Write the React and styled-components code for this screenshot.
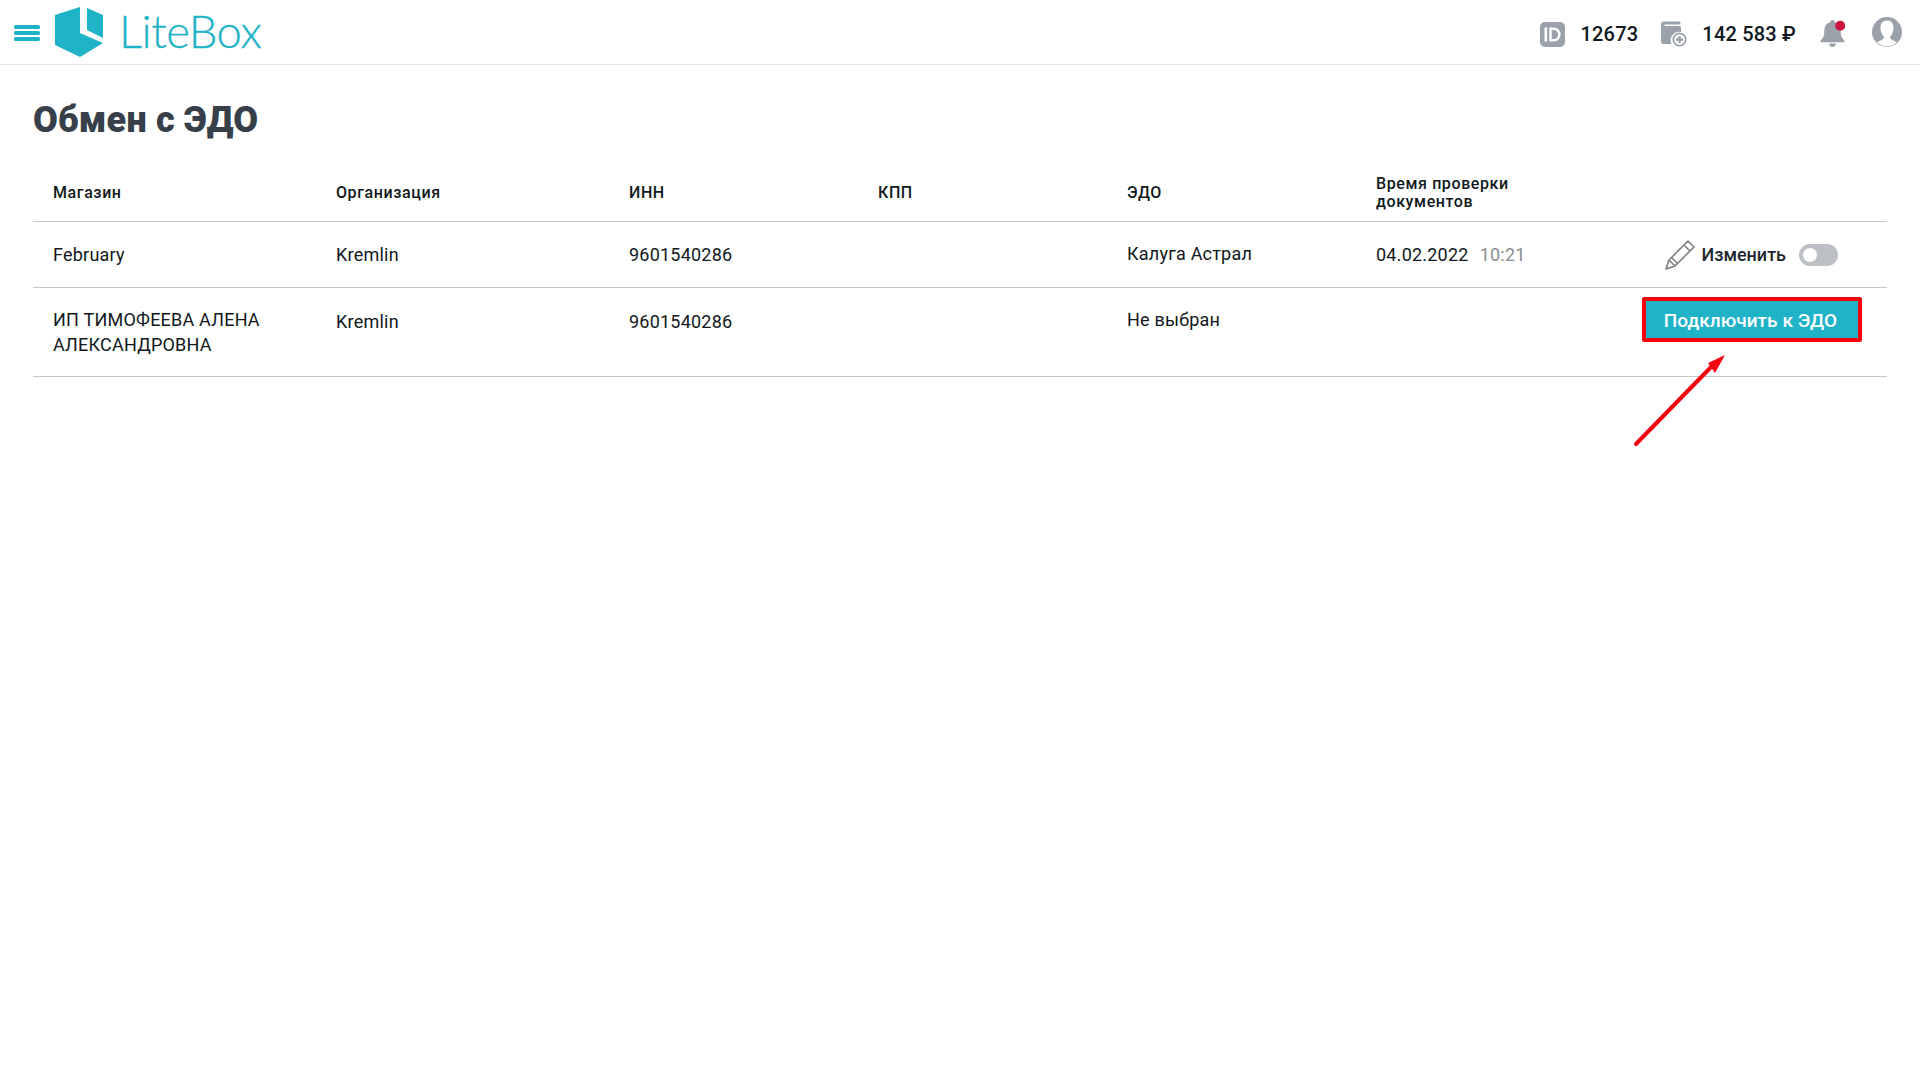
import React from "react";
import styled, { createGlobalStyle } from "styled-components";

const Global = createGlobalStyle`
  html, body { margin: 0; padding: 0; background: #fff; }
  body { font-family: Roboto, "Liberation Sans", sans-serif; color: #111820; }
`;

const Page = styled.div`
  position: relative;
  width: 1920px;
  height: 1080px;
  overflow: hidden;
  background: #fff;
`;
const TopBar = styled.header`
  display: flex;
  align-items: center;
  justify-content: space-between;
  height: 64px;
  box-sizing: content-box;
  border-bottom: 1px solid #e3e6ef;
  padding: 0 18px 0 14px;
`;
const Brand = styled.div`
  display: flex;
  align-items: center;
`;
const Burger = styled.div`
  display: flex;
  flex-direction: column;
  gap: 2px;
  width: 26px;
  margin-right: 15px;
  margin-top: 1px;
  span { display: block; height: 4px; border-radius: 1.5px; background: #1fb3c8; }
`;
const LogoText = styled.span`
  font-family: Lato, sans-serif;
  font-weight: 300;
  font-size: 45.5px;
  line-height: 64px;
  color: #1fb3c8;
  margin-left: 14px;
  margin-top: -2px;
  letter-spacing: -0.5px;
  -webkit-text-stroke: 0.3px #1fb3c8;
`;
const Stats = styled.div`
  display: flex;
  align-items: center;
  padding-top: 4px;
`;
const StatValue = styled.span`
  font-size: 20px;
  font-weight: 500;
  letter-spacing: 0.2px;
  color: #111820;
  margin-left: ${(p) => p.$left}px;
  margin-right: ${(p) => p.$right}px;
  margin-top: -1px;
`;
const BellIcon = styled.svg`
  margin-right: 27px;
  margin-top: -2px;
`;
const AvatarIcon = styled.svg`
  margin-top: -4px;
`;
const Content = styled.main`
  padding: 0 33px;
`;
const Title = styled.h1`
  margin: 0;
  padding-top: 31px;
  height: 49px;
  font-size: 36px;
  line-height: 48px;
  font-weight: 900;
  color: #373f4a;
  letter-spacing: 0.2px;
`;
const Grid = styled.div`
  display: grid;
  grid-template-columns: 283px 293px 249px 249px 249px 1fr;
  border-bottom: 1px solid #c4c6c8;
  align-items: center;
  height: ${(p) => p.$h}px;
  box-sizing: content-box;
`;
const HeadCell = styled.div`
  padding-left: 20px;
  margin-top: 20px;
  font-size: 16px;
  line-height: 18.5px;
  font-weight: 500;
  letter-spacing: 0.6px;
  color: #111820;
`;
const Cell = styled.div`
  padding-left: 20px;
  font-size: 18px;
  line-height: 25px;
  letter-spacing: 0.22px;
  color: #111820;
  margin-top: ${(p) => p.$shift || 0}px;
`;
const TimeCell = styled(Cell)`
  display: flex;
  align-items: center;
  justify-content: space-between;
  padding-right: 49px;
`;
const Muted = styled.span`
  color: #8a8d90;
  margin-left: 11px;
`;
const Actions = styled.div`
  display: flex;
  align-items: center;
`;
const EditLabel = styled.span`
  font-size: 18px;
  font-weight: 500;
  letter-spacing: 0;
  color: #20262e;
  margin-left: 7px;
`;
const Toggle = styled.div`
  width: 39px;
  height: 22px;
  border-radius: 11px;
  background: #bcc0c5;
  margin-left: 13px;
  display: flex;
  align-items: center;
  padding-left: 4px;
  box-sizing: border-box;
  &::before {
    content: "";
    width: 14px;
    height: 14px;
    border-radius: 50%;
    background: #fff;
  }
`;
const ConnectAction = styled.div`
  display: flex;
  justify-content: flex-end;
  padding-right: 25px;
  margin-top: -25px;
`;
const ConnectButton = styled.button`
  width: 220px;
  height: 45px;
  box-sizing: border-box;
  border: 4px solid #f5000f;
  border-radius: 2px;
  background: #1fb3c8;
  color: #fff;
  font-family: inherit;
  font-size: 19px;
  font-weight: 500;
  letter-spacing: 0.05px;
  padding: 2px 3px 0 0;
`;
const Arrow = styled.svg`
  position: absolute;
  left: 1625px;
  top: 345px;
`;

export default function App() {
  return (
    <Page>
      <Global />
      <TopBar>
        <Brand>
          <Burger><span /><span /><span /></Burger>
          <svg width="50" height="52" viewBox="0 0 50 52">
            <path fill="#1fb3c8" d="M25 1 L0 9 V39 L25 51 L48 37 L25 27 Z" />
            <path fill="#1fb3c8" d="M32 2 L48 9 V32 L32 24 Z" />
          </svg>
          <LogoText>LiteBox</LogoText>
        </Brand>
        <Stats>
          <svg width="25" height="25" viewBox="0 0 25 25">
            <rect width="25" height="25" rx="5" fill="#9aa1aa" />
            <rect x="4.5" y="5.5" width="2.6" height="14" fill="#fff" />
            <path d="M10.5 6.8 h3.2 a5.7 5.7 0 0 1 0 11.4 h-3.2 Z" fill="none" stroke="#fff" strokeWidth="2.4" />
          </svg>
          <StatValue $left={15} $right={23}>12673</StatValue>
          <svg width="26" height="26" viewBox="0 0 26 26">
            <path fill="#9aa1aa" d="M3 0.5 H18 a1.5 1.5 0 0 1 0 3 H3.5 V5 H18 a2 2 0 0 1 2 2 V11 A8.5 8.5 0 0 0 10.5 23 H2.5 A2.5 2.5 0 0 1 0 20.5 V3.5 A3 3 0 0 1 3 0.5 Z" />
            <circle cx="18.5" cy="18.5" r="6.2" fill="none" stroke="#9aa1aa" strokeWidth="1.8" />
            <path d="M18.5 15 V22 M15 18.5 H22" stroke="#9aa1aa" strokeWidth="2.4" />
          </svg>
          <StatValue $left={15} $right={24}>142 583 ₽</StatValue>
          <BellIcon width="25" height="29" viewBox="0 0 26 30">
            <path fill="#9aa1aa" d="M13 1 a2.4 2.4 0 0 1 2.4 2.4 C20 4.6 21.5 8.5 21.5 13 C21.5 18 23 20 25.5 22.5 V24 H0.5 V22.5 C3 20 4.5 18 4.5 13 C4.5 8.5 6 4.6 10.6 3.4 A2.4 2.4 0 0 1 13 1 Z" />
            <path fill="#9aa1aa" d="M9.5 25.5 H16.5 A3.5 3.5 0 0 1 9.5 25.5 Z" />
            <circle cx="21" cy="7" r="5.2" fill="#cc1440" />
          </BellIcon>
          <AvatarIcon width="30" height="30" viewBox="0 0 30 30">
            <circle cx="15" cy="15" r="15" fill="#9aa1aa" />
            <path fill="#fff" d="M15 3.5 C20 3.5 22 7.5 21.5 12 C21 16 19 19 18 20 C18 22 20 23 25 25 A13.5 13.5 0 0 1 5 25 C10 23 12 22 12 20 C11 19 9 16 8.5 12 C8 7.5 10 3.5 15 3.5 Z" />
          </AvatarIcon>
        </Stats>
      </TopBar>
      <Content>
        <Title>Обмен с ЭДО</Title>
        <Grid $h={76}>
          <HeadCell>Магазин</HeadCell>
          <HeadCell>Организация</HeadCell>
          <HeadCell>ИНН</HeadCell>
          <HeadCell>КПП</HeadCell>
          <HeadCell>ЭДО</HeadCell>
          <HeadCell>Время проверки<br />документов</HeadCell>
        </Grid>
        <Grid $h={65}>
          <Cell>February</Cell>
          <Cell>Kremlin</Cell>
          <Cell>9601540286</Cell>
          <Cell />
          <Cell $shift={-2}>Калуга Астрал</Cell>
          <TimeCell>
            <span>04.02.2022<Muted>10:21</Muted></span>
            <Actions>
              <svg width="30" height="30" viewBox="0 0 30 30" fill="none" stroke="#7d7f82" strokeWidth="1.6" strokeLinejoin="round">
                <path d="M23 1 L29 7 L10 26 L1 29 L4 20 Z" />
                <path d="M19 5 L25 11 M4 20 L10 26 M6.5 17.5 L12.5 23.5" />
              </svg>
              <EditLabel>Изменить</EditLabel>
              <Toggle />
            </Actions>
          </TimeCell>
        </Grid>
        <Grid $h={88}>
          <Cell>ИП ТИМОФЕЕВА АЛЕНА<br />АЛЕКСАНДРОВНА</Cell>
          <Cell $shift={-22}>Kremlin</Cell>
          <Cell $shift={-22}>9601540286</Cell>
          <Cell />
          <Cell $shift={-26}>Не выбран</Cell>
          <ConnectAction><ConnectButton>Подключить к ЭДО</ConnectButton></ConnectAction>
        </Grid>
      </Content>
      <Arrow width="110" height="110" viewBox="0 0 110 110">
        <path d="M11 99 L88 20" stroke="#f5000f" strokeWidth="4" strokeLinecap="round" />
        <path d="M100 10 L83 18 L90 28 Z" fill="#f5000f" />
      </Arrow>
    </Page>
  );
}
